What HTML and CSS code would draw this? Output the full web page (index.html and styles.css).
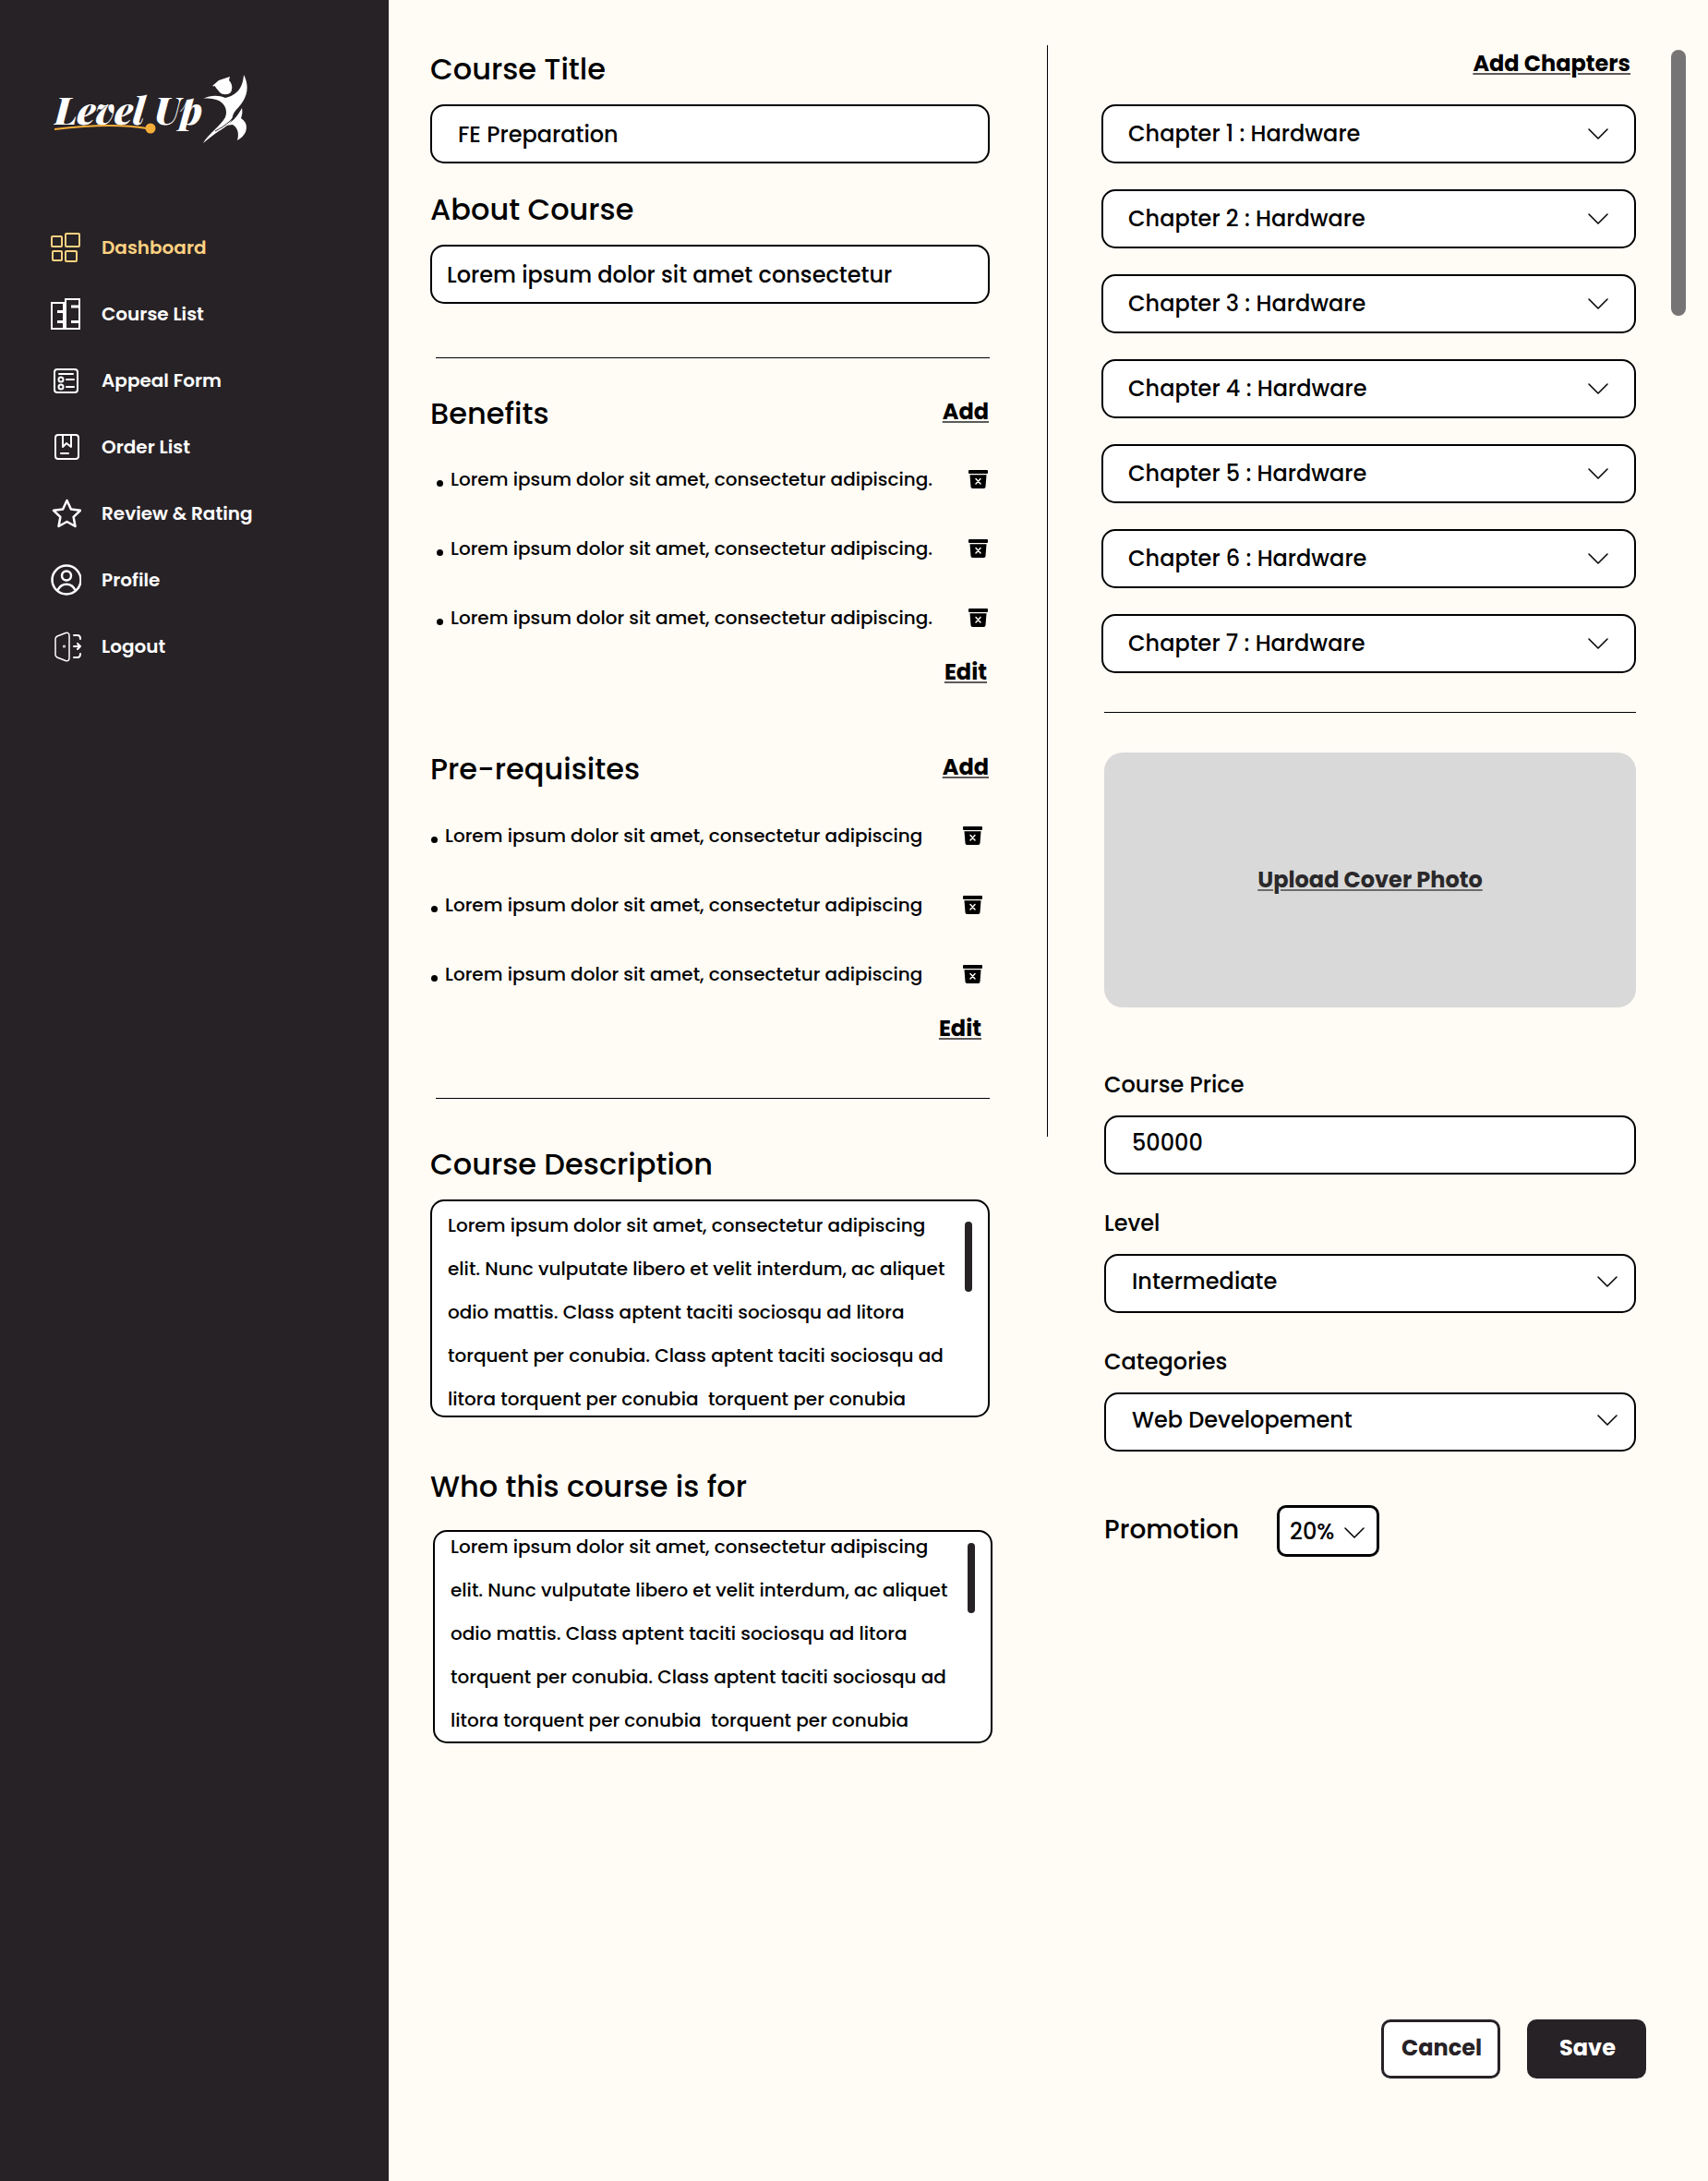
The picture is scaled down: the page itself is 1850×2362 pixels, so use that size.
FILE: index.html
```html
<!DOCTYPE html>
<html lang="en">
<head>
<meta charset="utf-8">
<meta name="viewport" content="width=device-width, initial-scale=1">
<title>Level Up – Edit Course</title>
<link rel="stylesheet" href="styles.css">
</head>
<body>
<svg class="sprite" aria-hidden="true">
  <symbol id="chevron" viewBox="0 0 22 12"><path d="M1 1l10 10L21 1" fill="none" stroke="#000" stroke-width="1.5" stroke-linecap="round" stroke-linejoin="round"/></symbol>
  <symbol id="trash" viewBox="0 0 21 20"><rect width="21" height="4" rx="1"/><path d="M1.5 5.3h18l-1 12.700a2 2 0 0 1-2 2h-12a2 2 0 0 1-2-2z"/><path d="M8 9.500l5 5.500M13 9.500l-5 5.500" stroke="#fffbf5" stroke-width="1.500" stroke-linecap="round"/></symbol>
</svg>
<div class="page">
  <aside class="sidebar">
    <a class="logo" href="#" aria-label="Level Up">
      <svg width="214" height="80" viewBox="0 0 214 80">
        <text class="logo-text" x="1" y="55">Level</text>
        <text class="logo-text" x="109" y="55">Up</text>
        <path d="M1 60C34 56 72 54 101 59" fill="none" stroke="#f6ae3a" stroke-width="2"/>
        <circle cx="105" cy="59" r="5.500" fill="#f6ae3a"/>
        <g fill="#fff">
          <path d="M172 13l7-6 12-4-1 4c4 4 4 9 2 13-3 3-9 3-12 0l-5-6z"/>
          <path d="M174 13l5 9" stroke="#272226" stroke-width="1"/>
          <path d="M162 27c8-4 17-4 24-1 13-3 19-11 20-25 5 9 5 20-1 29-4 7-10 10-11 16-1 7-8 12-15 16-6 4-11 8-17 13 5-9 19-19 24-28 3-8-1-15-7-18-5-2-11-3-17-2z"/>
          <path d="M186 56c8-4 14-11 18-19 1 5 0 8-1 11 6 4 7 9 5 15-2 4-5 7-9 9 2-7 1-13-5-17z"/>
          <path d="M175 62c12-6 21-14 28-26" fill="none" stroke="#272226" stroke-width="1"/>
        </g>
      </svg>
    </a>
    <nav class="nav">
      <a class="nav-link is-active" href="#">
        <svg width="34" height="34" viewBox="0 0 34 34" fill="none" stroke="currentColor" stroke-width="2"><rect x="2" y="5" width="11" height="11" rx="1"/><rect x="17" y="2" width="15" height="14" rx="1"/><rect x="3" y="21" width="10" height="10" rx="1"/><rect x="17" y="21" width="12" height="11" rx="1"/></svg>
        Dashboard</a>
      <a class="nav-link" href="#">
        <svg width="34" height="34" viewBox="0 0 34 34" fill="none" stroke="currentColor" stroke-width="2"><rect x="2" y="5" width="13" height="28"/><rect x="17" y="1" width="15" height="32"/><path d="M8 14.500h7M8 25.500h7M23 9h9M23 25.500h9" stroke-width="3"/></svg>
        Course List</a>
      <a class="nav-link" href="#">
        <svg width="34" height="34" viewBox="0 0 34 34" fill="none" stroke="currentColor" stroke-width="2" stroke-linecap="round"><rect x="5" y="5" width="25" height="25" rx="3"/><path d="M10 10h15M18 16h8M18 24h8"/><circle cx="12" cy="16" r="2.500"/><circle cx="12" cy="24" r="2.500"/></svg>
        Appeal Form</a>
      <a class="nav-link" href="#">
        <svg width="34" height="34" viewBox="0 0 34 34" fill="none" stroke="currentColor" stroke-width="2" stroke-linecap="round" stroke-linejoin="round"><rect x="6" y="4" width="25" height="26" rx="3"/><path d="M14 4v13l4-4 5 4V4M12 24h8"/></svg>
        Order List</a>
      <a class="nav-link" href="#">
        <svg width="34" height="34" viewBox="0 0 34 34" fill="none" stroke="currentColor" stroke-width="2.500" stroke-linejoin="round"><path d="M18.500 3l4.400 9.500 10.100 1.300-7.400 7 1.900 10.200-9-5-9 5 1.900-10.200-7.400-7 10.100-1.300z"/></svg>
        Review &amp; Rating</a>
      <a class="nav-link" href="#">
        <svg width="34" height="34" viewBox="0 0 34 34" fill="none" stroke="currentColor" stroke-width="2.500"><circle cx="18" cy="17" r="15.500"/><circle cx="18" cy="12.500" r="5"/><path d="M8.500 28c4-8.500 15-8.500 19 0"/></svg>
        Profile</a>
      <a class="nav-link" href="#">
        <svg width="34" height="34" viewBox="0 0 34 34" fill="none" stroke="currentColor" stroke-width="2" stroke-linecap="round" stroke-linejoin="round"><path d="M6 9q0-2 2-3l9-3.500q4-1 4 3v24q0 4-4 3L8 29q-2-1-2-3z" stroke-width="1.500"/><circle cx="15.500" cy="17" r=".5"/><path d="M26 5h4q3 0 3 4M26 29h4q3 0 3-4M26 17h7M30 14l3 3-3 3"/></svg>
        Logout</a>
    </nav>
  </aside>

  <main class="main">
    <form class="editor">
      <div class="columns">
        <div class="details">
          <label class="heading" for="title">Course Title</label>
          <input class="box title-input" id="title" type="text" value="FE Preparation">
          <label class="heading next-heading" for="about">About Course</label>
          <input class="box about-input" id="about" type="text" value="Lorem ipsum dolor sit amet consectetur">
          <hr class="rule inset-rule">

          <section class="benefits">
            <div class="list-head"><h2 class="heading">Benefits</h2><a class="action" href="#">Add</a></div>
            <ul class="points">
              <li class="point"><span>Lorem ipsum dolor sit amet, consectetur adipiscing.</span><button class="trash" type="button" aria-label="Delete"><svg width="21" height="20"><use href="#trash"/></svg></button></li>
              <li class="point"><span>Lorem ipsum dolor sit amet, consectetur adipiscing.</span><button class="trash" type="button" aria-label="Delete"><svg width="21" height="20"><use href="#trash"/></svg></button></li>
              <li class="point"><span>Lorem ipsum dolor sit amet, consectetur adipiscing.</span><button class="trash" type="button" aria-label="Delete"><svg width="21" height="20"><use href="#trash"/></svg></button></li>
            </ul>
            <div class="list-foot"><a class="action" href="#">Edit</a></div>
          </section>

          <section class="prerequisites">
            <div class="list-head"><h2 class="heading">Pre-requisites</h2><a class="action" href="#">Add</a></div>
            <ul class="points">
              <li class="point"><span>Lorem ipsum dolor sit amet, consectetur adipiscing</span><button class="trash" type="button" aria-label="Delete"><svg width="21" height="20"><use href="#trash"/></svg></button></li>
              <li class="point"><span>Lorem ipsum dolor sit amet, consectetur adipiscing</span><button class="trash" type="button" aria-label="Delete"><svg width="21" height="20"><use href="#trash"/></svg></button></li>
              <li class="point"><span>Lorem ipsum dolor sit amet, consectetur adipiscing</span><button class="trash" type="button" aria-label="Delete"><svg width="21" height="20"><use href="#trash"/></svg></button></li>
            </ul>
            <div class="list-foot"><a class="action" href="#">Edit</a></div>
          </section>
          <hr class="rule inset-rule">

          <label class="heading description-heading" for="description">Course Description</label>
          <div class="area">
            <textarea class="area-text" id="description" rows="5">Lorem ipsum dolor sit amet, consectetur adipiscing
elit. Nunc vulputate libero et velit interdum, ac aliquet
odio mattis. Class aptent taciti sociosqu ad litora
torquent per conubia. Class aptent taciti sociosqu ad
litora torquent per conubia  torquent per conubia</textarea>
            <span class="area-thumb"></span>
          </div>
          <label class="heading audience-heading" for="audience">Who this course is for</label>
          <div class="area area-scrolled">
            <textarea class="area-text" id="audience" rows="5">Lorem ipsum dolor sit amet, consectetur adipiscing
elit. Nunc vulputate libero et velit interdum, ac aliquet
odio mattis. Class aptent taciti sociosqu ad litora
torquent per conubia. Class aptent taciti sociosqu ad
litora torquent per conubia  torquent per conubia</textarea>
            <span class="area-thumb"></span>
          </div>
        </div>

        <div class="divider"></div>

        <div class="settings">
          <div class="chapters-head"><a class="action" href="#">Add Chapters</a></div>
          <div class="chapters">
            <button class="box chapter" type="button">Chapter 1 : Hardware<svg width="22" height="12"><use href="#chevron"/></svg></button>
            <button class="box chapter" type="button">Chapter 2 : Hardware<svg width="22" height="12"><use href="#chevron"/></svg></button>
            <button class="box chapter" type="button">Chapter 3 : Hardware<svg width="22" height="12"><use href="#chevron"/></svg></button>
            <button class="box chapter" type="button">Chapter 4 : Hardware<svg width="22" height="12"><use href="#chevron"/></svg></button>
            <button class="box chapter" type="button">Chapter 5 : Hardware<svg width="22" height="12"><use href="#chevron"/></svg></button>
            <button class="box chapter" type="button">Chapter 6 : Hardware<svg width="22" height="12"><use href="#chevron"/></svg></button>
            <button class="box chapter" type="button">Chapter 7 : Hardware<svg width="22" height="12"><use href="#chevron"/></svg></button>
          </div>
          <div class="publish">
            <hr class="rule">
            <button class="cover" type="button">Upload Cover Photo</button>
            <div class="fields">
              <div class="field">
                <label for="price">Course Price</label>
                <input class="box field-box" id="price" type="text" inputmode="numeric" value="50000">
              </div>
              <div class="field">
                <label for="level">Level</label>
                <div class="select"><select class="box field-box" id="level"><option>Intermediate</option></select><svg class="select-arrow" width="22" height="12"><use href="#chevron"/></svg></div>
              </div>
              <div class="field">
                <label for="category">Categories</label>
                <div class="select"><select class="box field-box" id="category"><option>Web Developement</option></select><svg class="select-arrow" width="22" height="12"><use href="#chevron"/></svg></div>
              </div>
            </div>
            <div class="promotion">
              <label class="promotion-label" for="promotion">Promotion</label>
              <div class="select"><select class="promotion-select" id="promotion"><option>20%</option></select><svg class="select-arrow promotion-arrow" width="22" height="12"><use href="#chevron"/></svg></div>
            </div>
          </div>
        </div>

        <div class="page-thumb"></div>
      </div>

      <div class="form-actions">
        <button class="btn btn-outline" type="button">Cancel</button>
        <button class="btn btn-solid" type="submit">Save</button>
      </div>
    </form>
  </main>
</div>
</body>
</html>
```
FILE: styles.css
```css
* {
  box-sizing: border-box;
}

body {
  margin: 0;
  background: #fffbf5;
  color: #000;
  font-family: Poppins, Inter, sans-serif;
  font-size: 24px;
  font-weight: 500;
  line-height: 36px;
}

input,
select,
textarea,
button {
  margin: 0;
  color: inherit;
  font: inherit;
}

button {
  cursor: pointer;
}

.sprite {
  position: absolute;
  width: 0;
  height: 0;
}

.page {
  display: flex;
  min-height: 100vh;
}

/* Sidebar */

.sidebar {
  flex: 0 0 421px;
  padding: 80px 54px;
  background: #272226;
}

.logo {
  display: block;
  height: 80px;
  margin-left: 4px;
}

.logo-text {
  fill: #fff;
  font: italic 900 40px "Playfair Display", "Liberation Serif", serif;
}

.nav {
  display: flex;
  flex-direction: column;
  gap: 38px;
  margin-top: 91px;
}

.nav-link {
  display: flex;
  align-items: center;
  gap: 22px;
  color: #fff;
  font-size: 20px;
  font-weight: 600;
  line-height: 34px;
  text-decoration: none;
}

.nav-link.is-active {
  color: #ffd281;
}

/* Form layout */

.main {
  display: flex;
  flex: 1;
  min-width: 0;
}

.editor {
  display: flex;
  flex: 1;
  flex-direction: column;
  min-width: 0;
}

.columns {
  display: flex;
  align-items: flex-start;
  padding: 49px 24px 64px 45px;
}

.details {
  display: flex;
  flex: 606 1 0;
  flex-direction: column;
  min-width: 0;
  padding-top: 2px;
}

.divider {
  width: 1px;
  height: 1182px;
  margin: 0 58px 0 62px;
  background: #000;
}

.settings {
  flex: 579 1 0;
  min-width: 0;
  padding-top: 2px;
}

.page-thumb {
  width: 16px;
  height: 288px;
  margin: 5px 0 0 38px;
  border-radius: 8px;
  background: #767474;
}

.heading {
  margin: 0;
  font-size: 32px;
  font-weight: 500;
  line-height: 48px;
}

.next-heading {
  margin-top: 26px;
}

.box {
  display: block;
  width: 100%;
  height: 64px;
  border: 2px solid #000;
  border-radius: 15px;
  background: #fff;
}

.title-input,
.about-input {
  margin-top: 14px;
}

.title-input {
  padding: 0 28px;
}

.about-input {
  padding: 0 16px;
}

.rule {
  width: 100%;
  height: 1px;
  margin: 0;
  border: 0;
  background: #000;
}

.inset-rule {
  width: auto;
  margin: 58px 0 0 6px;
}

.action {
  color: #000;
  font-weight: 700;
  text-decoration: underline #5d5b59 2px;
  text-underline-offset: 2px;
}

/* Benefits and pre-requisites */

.benefits {
  margin-top: 36px;
}

.prerequisites {
  margin-top: 63px;
}

.list-head {
  display: flex;
  justify-content: space-between;
  padding-right: 1px;
}

.list-head .action {
  line-height: 44px;
}

.points {
  display: flex;
  flex-direction: column;
  gap: 45px;
  margin: 32px 0 0;
  padding: 0 2px 0 7px;
  list-style: none;
}

.point {
  display: flex;
  align-items: center;
  font-size: 20px;
  line-height: 30px;
}

.point::before {
  width: 7px;
  height: 7px;
  margin: 8px 8px 0 0;
  border-radius: 50%;
  background: #000;
  content: "";
}

.trash {
  display: flex;
  margin-left: auto;
  padding: 0;
  border: 0;
  background: none;
}

.list-foot {
  margin-top: 26px;
  padding-right: 3px;
  text-align: right;
}

.list-foot .action {
  display: block;
}

.prerequisites .points {
  margin-top: 33px;
  padding: 0 8px 0 1px;
}

.prerequisites .list-foot {
  padding-right: 9px;
}

.prerequisites + .inset-rule {
  margin-top: 57px;
}

/* Long text boxes */

.description-heading {
  margin-top: 47px;
}

.audience-heading {
  margin-top: 51px;
}

.area {
  position: relative;
  height: 236px;
  margin-top: 14px;
  overflow: hidden;
  border: 2px solid #000;
  border-radius: 15px;
  background: #fff;
}

.area-text {
  display: block;
  width: 100%;
  height: 244px;
  padding: 3px 40px 0 17px;
  overflow: hidden;
  border: 0;
  outline: 0;
  background: none;
  font-size: 20px;
  line-height: 47px;
  resize: none;
  white-space: pre;
}

.area-thumb {
  position: absolute;
  top: 22px;
  right: 17px;
  width: 8px;
  height: 76px;
  border-radius: 4px;
  background: #272226;
}

.area-scrolled {
  height: 231px;
  margin: 23px -3px 0 3px;
}

.area-scrolled .area-text {
  margin-top: -10px;
}

.area-scrolled .area-thumb {
  top: 12px;
}

/* Chapters */

.chapters-head {
  padding-right: 6px;
  text-align: right;
}

.chapters {
  display: flex;
  flex-direction: column;
  gap: 28px;
  margin-top: 26px;
}

.chapter {
  display: flex;
  align-items: center;
  justify-content: space-between;
  padding: 0 28px 0 27px;
}

/* Cover, price and categories */

.publish {
  margin-top: 42px;
  padding-left: 3px;
}

.cover {
  display: block;
  width: 100%;
  height: 276px;
  margin-top: 43px;
  border: 0;
  border-radius: 20px;
  background: #d9d9d9;
  color: #2a282a;
  font-weight: 700;
  text-decoration: underline #6b6b6b 2px;
  text-underline-offset: 2px;
}

.fields {
  display: flex;
  flex-direction: column;
  gap: 35px;
  margin-top: 66px;
}

.field {
  display: flex;
  flex-direction: column;
  gap: 15px;
}

.field-box {
  padding: 0 60px 5px 28px;
}

.select {
  position: relative;
}

.select select {
  appearance: none;
}

.select .field-box {
  padding-bottom: 4px;
}

.select-arrow {
  position: absolute;
  top: 24px;
  right: 20px;
  pointer-events: none;
}

.promotion {
  display: flex;
  align-items: center;
  gap: 41px;
  margin-top: 58px;
}

.promotion-label {
  padding-bottom: 2px;
  font-size: 28px;
}

.promotion-select {
  display: block;
  width: 111px;
  height: 56px;
  padding: 2px 0 0 11px;
  border: 3px solid #000;
  border-radius: 10px;
  background: #fff;
}

.promotion-arrow {
  right: 16px;
}

/* Buttons */

.form-actions {
  display: flex;
  justify-content: flex-end;
  gap: 29px;
  margin-top: auto;
  padding: 0 67px 111px;
}

.btn {
  width: 129px;
  height: 64px;
  padding: 0 0 2px 2px;
  border: 3px solid #272226;
  border-radius: 10px;
  font-weight: 700;
}

.btn-outline {
  background: #fff;
  color: #272226;
}

.btn-solid {
  background: #272226;
  color: #fff;
}
```
